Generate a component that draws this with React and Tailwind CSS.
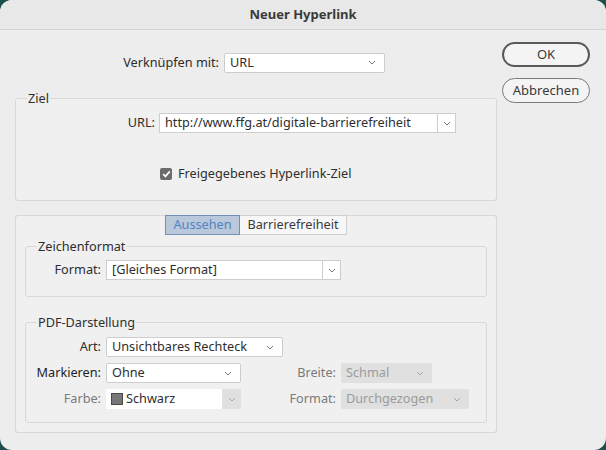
import React from "react";

function Chevron({ className = "" }) {
  return (
    <svg width="8" height="5" viewBox="0 0 8 5" className={className}>
      <path d="M1 1l3 3 3-3" fill="none" stroke="currentColor" strokeWidth="1" />
    </svg>
  );
}

// plain popup: white field with a chevron on the right
function Select({ value, width, disabled = false }) {
  return (
    <div
      className={`h-[20px] flex items-center justify-between pl-[5px] pr-[8px] rounded-[2px] ${
        disabled
          ? "bg-[#e0e0e0] text-[#9b9b9b]"
          : "bg-white border border-[#cdcdcd] text-[#2e2e2e]"
      }`}
      style={{ width }}
    >
      <span>{value}</span>
      <Chevron className={disabled ? "text-[#a6a6a6]" : "text-[#777]"} />
    </div>
  );
}

// combo: editable field + separate dropdown button
function Combo({ value, width, swatch = false, flat = false }) {
  return (
    <div className="h-[20px] flex" style={{ width }}>
      <div
        className={`flex-1 flex items-center gap-[3px] pl-[5px] bg-white ${
          flat ? "" : "border border-[#cdcdcd] border-r-0"
        }`}
      >
        {swatch && <span className="w-[12px] h-[12px] bg-[#777] border border-[#4a4a4a]" />}
        <span className="text-[#2e2e2e]">{value}</span>
      </div>
      <div
        className={`w-[19px] flex items-center justify-center ${
          flat ? "bg-[#e0e0e0] text-[#a6a6a6]" : "bg-white border border-[#cdcdcd] text-[#777]"
        }`}
      >
        <Chevron />
      </div>
    </div>
  );
}

function Group({ title, className = "", children }) {
  return (
    <fieldset className={`border border-[#d8d8d8] rounded-[3px] bg-[#f0f0f0] ${className}`}>
      <legend className="ml-[11px] px-[1px] leading-[16px] text-[#2e2e2e]">{title}</legend>
      {children}
    </fieldset>
  );
}

export default function App() {
  return (
    <div className="w-[606px] h-[450px] bg-[#1d4f4c] overflow-hidden font-['Noto_Sans','Open_Sans',sans-serif] text-[12.7px] text-[#2e2e2e]">
      <div className="h-full rounded-[12px] bg-[#ededed] flex flex-col overflow-hidden">
        <div className="h-[30px] shrink-0 bg-[#e8e8e8] border-b border-[#d4d4d4] flex items-center justify-center font-bold text-[13px] text-[#3a3a3a]">
          Neuer Hyperlink
        </div>

        <div className="flex">
          {/* left column */}
          <div className="ml-[15px] w-[482px] flex flex-col">
            <div className="mt-[22px] flex items-center h-[21px]">
              <div className="w-[209px] text-right pr-[5px]">Verknüpfen mit:</div>
              <Select value="URL" width={161} />
            </div>

            <Group title="Ziel" className="mt-[17px] h-[111px]">
              <div className="mt-[7px] flex items-center">
                <div className="w-[143px] text-right pr-[4px]">URL:</div>
                <Combo value="http://www.ffg.at/digitale-barrierefreiheit" width={297} />
              </div>
              <div className="mt-[31px] ml-[144px] flex items-center gap-[6px]">
                <span className="w-[12px] h-[12px] rounded-[2px] bg-[#6b6b6b] flex items-center justify-center">
                  <svg width="9" height="8" viewBox="0 0 9 8">
                    <path d="M1.2 4.2l2.2 2.2L7.8 1.4" fill="none" stroke="#fff" strokeWidth="1.7" />
                  </svg>
                </span>
                <span>Freigegebenes Hyperlink-Ziel</span>
              </div>
            </Group>

            <div className="mt-[14px] h-[218px] border border-[#d8d8d8] rounded-[3px] bg-[#f0f0f0] flex flex-col">
              <div className="-mt-px flex justify-center">
                <div className="w-[75px] h-[20px] flex items-center justify-center bg-[#b9c8da] border border-[#7390b6] text-[#5384c2]">
                  Aussehen
                </div>
                <div className="w-[107px] h-[20px] flex items-center justify-center bg-[#f7f7f7] border border-l-0 border-[#cfcfcf] text-[#3a3a3a]">
                  Barrierefreiheit
                </div>
              </div>

              <Group title="Zeichenformat" className="mx-[9px] mt-[3px] h-[59px]">
                <div className="mt-[6px] flex items-center">
                  <div className="w-[80px] text-right pr-[5px]">Format:</div>
                  <Combo value="[Gleiches Format]" width={235} />
                </div>
              </Group>

              <Group title="PDF-Darstellung" className="mx-[9px] mt-[17px] h-[109px]">
                <div className="mt-[7px] flex items-center">
                  <div className="w-[80px] text-right pr-[5px]">Art:</div>
                  <Select value="Unsichtbares Rechteck" width={177} />
                </div>
                <div className="mt-[6px] flex items-center">
                  <div className="w-[80px] text-right pr-[5px] text-[#1e1e1e]">Markieren:</div>
                  <Select value="Ohne" width={135} />
                  <div className="w-[100px] text-right pr-[5px] text-[#7a7a7a]">Breite:</div>
                  <Select value="Schmal" width={91} disabled />
                </div>
                <div className="mt-[6px] flex items-center">
                  <div className="w-[80px] text-right pr-[5px] text-[#7a7a7a]">Farbe:</div>
                  <Combo value="Schwarz" width={135} swatch flat />
                  <div className="w-[100px] text-right pr-[5px] text-[#7a7a7a]">Format:</div>
                  <Select value="Durchgezogen" width={128} disabled />
                </div>
              </Group>
            </div>
          </div>

          {/* right column */}
          <div className="ml-[5px] w-[88px] flex flex-col gap-[11px] mt-[12px]">
            <button className="h-[25px] rounded-full border-2 border-[#5a5a5a] bg-[#f4f4f4] text-[13px] text-[#3a3a3a]">
              OK
            </button>
            <button className="h-[25px] rounded-full border border-[#7a7a7a] bg-[#f4f4f4] text-[13px] text-[#3a3a3a]">
              Abbrechen
            </button>
          </div>
        </div>
      </div>
    </div>
  );
}
